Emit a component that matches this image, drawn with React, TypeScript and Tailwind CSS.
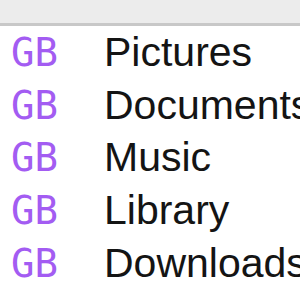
import React from "react";

const rows = ["Pictures", "Documents", "Music", "Library", "Downloads", "Developer"];

export default function App() {
  return (
    <div className="w-[300px] h-[300px] overflow-hidden bg-white relative" style={{ fontFamily: '"Liberation Sans", Arial, sans-serif' }}>
      <div className="h-[26px] bg-[#ececec] border-b-[3px] border-[#c8c8c8] overflow-hidden">
        <div className="-mt-[35px] text-[40px] leading-[30px] text-[#1c1c1c] whitespace-nowrap pl-[0px]">Size</div>
      </div>
      {rows.map((name) => (
        <div key={name} className="h-[52.75px] flex items-center whitespace-nowrap">
          <span
            className="w-[58px] text-right text-[39px] leading-none text-[#a35cf2] shrink-0 font-bold"
            style={{ fontFamily: '"DejaVu Sans Mono", "Liberation Mono", monospace', fontWeight: 500 }}
          >
            GB
          </span>
          <span className="ml-[46px] text-[41px] leading-none text-[#141414]">{name}</span>
        </div>
      ))}
    </div>
  );
}
